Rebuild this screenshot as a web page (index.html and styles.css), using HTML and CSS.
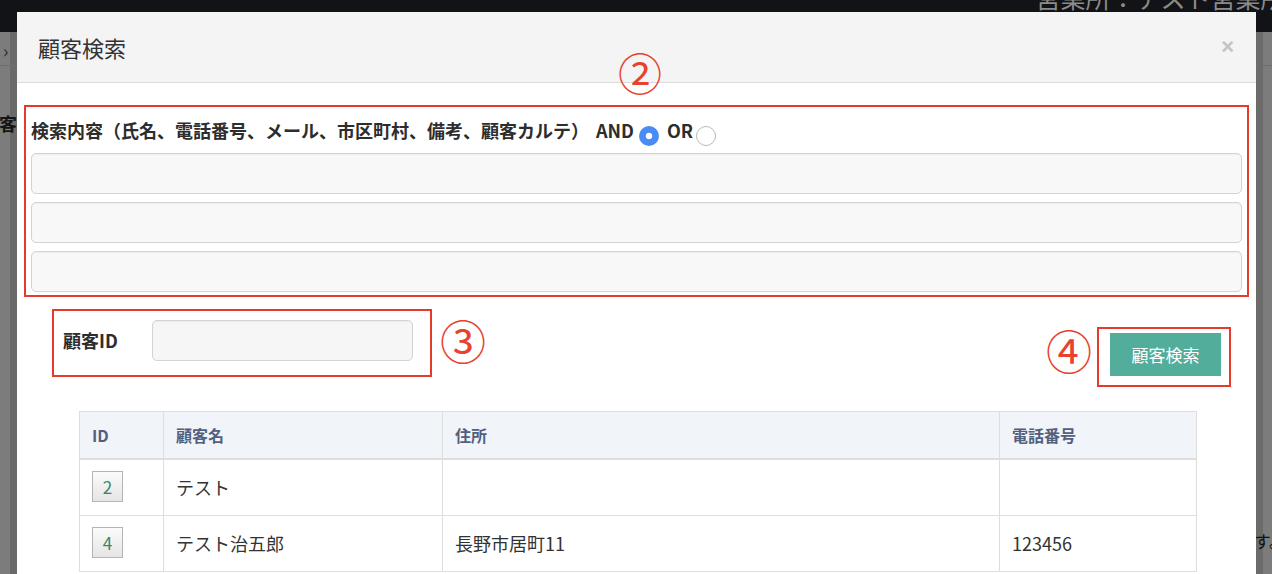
FILE: index.html
```html
<!DOCTYPE html>
<html lang="ja">
<head>
<meta charset="utf-8">
<title>顧客検索</title>
<link rel="stylesheet" href="styles.css">
</head>
<body>
<div class="page">
  <header class="topbar"><span class="office">営業所：テスト営業所(ホール</span></header>
  <div class="crumbs"><span class="chev">›</span></div>
  <h1 class="page-title">客</h1>
  <p class="page-note">ます。</p>
</div>

<div class="modal">
  <div class="modal-header">
    <h4 class="modal-title">顧客検索</h4>
    <span class="close">×</span>
  </div>
  <div class="modal-body">
    <span class="mark mark-2">②</span>
    <div class="redbox keyword-box">
      <div class="kw-label">検索内容（氏名、電話番号、メール、市区町村、備考、顧客カルテ）<span class="kw-and">AND</span><span class="radio checked"></span><span class="kw-or">OR</span><span class="radio"></span></div>
      <input class="field kw-field" type="text">
      <input class="field kw-field" type="text">
      <input class="field kw-field" type="text">
    </div>

    <div class="id-row">
      <div class="redbox id-box">
        <label class="id-label">顧客ID</label>
        <input class="field id-field" type="text">
      </div>
      <span class="mark mark-3">③</span>
      <span class="spacer"></span>
      <span class="mark mark-4">④</span>
      <div class="redbox btn-box">
        <button class="btn-search" type="button">顧客検索</button>
      </div>
    </div>

    <table class="result">
      <colgroup>
        <col class="c-id"><col class="c-name"><col class="c-addr"><col class="c-tel">
      </colgroup>
      <thead>
        <tr><th>ID</th><th>顧客名</th><th>住所</th><th>電話番号</th></tr>
      </thead>
      <tbody>
        <tr><td><span class="id-btn">2</span></td><td>テスト</td><td></td><td></td></tr>
        <tr><td><span class="id-btn">4</span></td><td>テスト治五郎</td><td>長野市居町11</td><td>123456</td></tr>
      </tbody>
    </table>
  </div>
</div>
</body>
</html>
```

FILE: styles.css
```css
html, body {
  margin: 0;
  height: 574px;
  overflow: hidden;
}

body {
  position: relative;
  font-family: "Noto Sans CJK JP", "Noto Sans", sans-serif;
  color: #333;
  background: linear-gradient(to right,
    #7c7c7c 0, #7c7c7c 10px,
    #6a6a6a 10px, #6a6a6a 17px,
    #7c7c7c 17px, #7c7c7c 1256px,
    #6b6b6b 1256px, #6b6b6b 1263px,
    #7c7c7c 1263px);
}

/* ---------- background page (dimmed) ---------- */
.topbar {
  height: 32px;
  background: #111317;
  display: flex;
  justify-content: flex-end;
  overflow: hidden;
}
.office {
  margin-top: -16px;
  margin-right: -97px;
  font-size: 25px;
  line-height: 26px;
  color: #8b8b8b;
  white-space: nowrap;
}
.crumbs {
  height: 33px;
  border-bottom: 1px solid #6f6f6f;
  display: flex;
  align-items: flex-end;
}
.chev {
  margin-left: 3px;
  font-size: 18px;
  line-height: 30px;
  color: #2b2b2b;
}
.page-title {
  margin: 44px 0 0 -1px;
  font-size: 18px;
  line-height: 27px;
  font-weight: 700;
  color: #151515;
}
.page-note {
  margin: 392px -14px 0 0;
  text-align: right;
  font-size: 17px;
  line-height: 24px;
  color: #111;
}

/* ---------- modal ---------- */
.modal {
  position: absolute;
  left: 17px;
  top: 12px;
  width: 1239px;
  height: 620px;
  background: #fff;
}
.modal-header {
  box-sizing: border-box;
  height: 71px;
  border-bottom: 1px solid #dcdcdc;
  background: #f4f4f4;
  display: flex;
  align-items: center;
  padding: 0 22px 0 21px;
}
.modal-title {
  flex: 1;
  margin: 0;
  font-size: 22px;
  line-height: 30px;
  font-weight: 400;
  color: #333;
}
.close {
  font-family: "Liberation Sans", sans-serif;
  font-size: 22px;
  font-weight: 700;
  line-height: 22px;
  color: #c3c3c3;
}

.modal-body {
  position: relative;
  padding: 22px 7px 0 7px;
}

.redbox {
  border: 2px solid #e63a2d;
  box-sizing: border-box;
}

.mark {
  font-family: "Noto Sans CJK JP", sans-serif;
  font-size: 46px;
  line-height: 60px;
  height: 60px;
  color: #e8412f;
}
.mark-2 {
  position: absolute;
  left: 601px;
  top: -41px;
  font-size: 44px;
}

/* keyword block */
.keyword-box {
  padding: 10px 5px 3px 5px;
}
.kw-label {
  height: 27px;
  font-size: 18px;
  line-height: 27px;
  font-weight: 700;
  color: #2d2d2d;
  margin-bottom: 9px;
  white-space: nowrap;
}
.kw-and { margin-left: 7px; }
.radio {
  display: inline-block;
  box-sizing: border-box;
  width: 20px;
  height: 20px;
  border-radius: 50%;
  border: 1px solid #b9b9b9;
  background: #fff;
  vertical-align: -8px;
  margin-left: 5px;
}
.radio + .kw-or { margin-left: 8px; }
.kw-or + .radio { margin-left: 3px; }
.radio.checked {
  border: none;
  background: radial-gradient(circle, #fff 0, #fff 3px, #4a8cf6 3.6px);
}

.field {
  display: block;
  box-sizing: border-box;
  width: 100%;
  height: 41px;
  margin: 0;
  border: 1px solid #d3d3d3;
  border-radius: 5px;
  background: #f8f8f8;
  box-shadow: inset 0 1px 1px rgba(0, 0, 0, 0.04);
  font: inherit;
}
.kw-field + .kw-field { margin-top: 8px; }

/* id row */
.id-row {
  display: flex;
  align-items: flex-start;
  margin-top: 12px;
}
.id-box {
  width: 380px;
  height: 68px;
  margin-left: 28px;
  padding: 9px 17px 14px 9px;
  display: flex;
  align-items: center;
}
.id-label {
  width: 89px;
  flex: none;
  font-size: 18px;
  font-weight: 700;
  color: #2d2d2d;
  line-height: 27px;
}
.id-field {
  width: 261px;
  background: #f6f6f6;
}
.mark-3 { margin-left: 8px; }
.spacer { flex: 1; }
.mark-4 {
  margin-top: 10px;
  margin-right: 5px;
}
.btn-box {
  width: 134px;
  height: 60px;
  margin-top: 18px;
  margin-right: 18px;
  padding: 4px 8px 9px 11px;
}
.btn-search {
  display: block;
  width: 111px;
  height: 43px;
  margin: 0;
  padding: 0;
  border: none;
  background: #53ad9b;
  color: #fff;
  font-family: "Noto Sans CJK JP", sans-serif;
  font-size: 17px;
  line-height: 43px;
}

/* results table */
.result {
  margin: 24px 0 0 55px;
  width: 1117px;
  border-collapse: collapse;
  table-layout: fixed;
  font-size: 18px;
  color: #333;
}
.c-id { width: 84px; }
.c-name { width: 279px; }
.c-addr { width: 557px; }
.c-tel { width: 197px; }
.result th,
.result td {
  border: 1px solid #dedede;
  text-align: left;
  padding: 0 12px;
}
.result th {
  height: 46px;
  background: #f1f4f9;
  color: #51607e;
  font-size: 16px;
  font-weight: 700;
  border-bottom: 2px solid #dedede;
}
.result td {
  height: 53px;
  padding-bottom: 2px;
  vertical-align: middle;
}
.id-btn {
  display: inline-block;
  box-sizing: border-box;
  width: 31px;
  height: 31px;
  border: 1px solid #b4b4b4;
  background: linear-gradient(#fbfbfb, #e5e5e5);
  color: #3a8767;
  text-align: center;
  line-height: 29px;
  font-size: 17px;
  vertical-align: middle;
}
```
